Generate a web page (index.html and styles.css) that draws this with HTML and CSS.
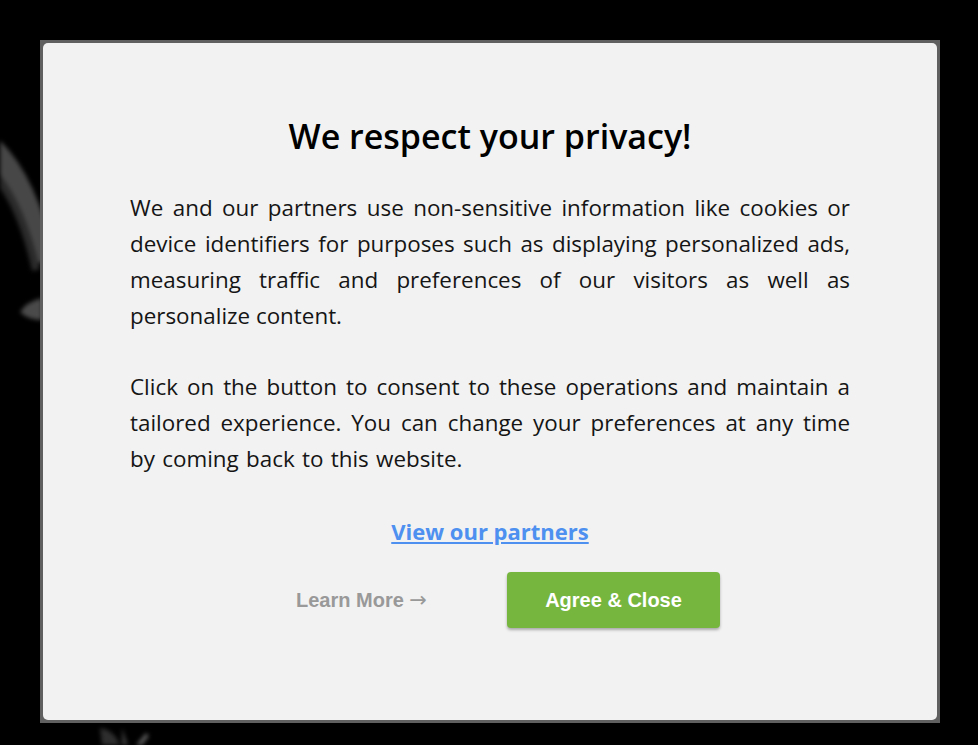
FILE: index.html
```html
<!DOCTYPE html>
<html lang="en">
<head>
    <meta charset="UTF-8">
    <meta name="viewport" content="width=device-width, initial-scale=1.0">
    <title>We respect your privacy</title>
    <link rel="stylesheet" href="styles.css">
</head>
<body>
    <!-- sfondo sfocato dietro al popup -->
    <svg class="backdrop" width="978" height="745" viewBox="0 0 978 745">
        <path d="M-20 138 Q 25 170 44 262" fill="none" stroke="#474747" stroke-width="22"/>
        <path d="M-20 160 Q 18 190 36 270" fill="none" stroke="#2a2a2a" stroke-width="8"/>
        <path d="M20 312 q6 -10 22 -14 l0 22 q-14 0 -22 -8z" fill="#4a4a4a"/>
        <path d="M100 728 q14 2 20 17 l-18 0z" fill="#2e2e2e"/>
        <path d="M122 728 l6 17 l-6 0z" fill="#3a3a3a"/>
        <path d="M136 745 l10 -12 l3 3 l-7 9z" fill="#5a5a5a"/>
    </svg>

    <div class="modal">
        <div class="panel">
            <h1>We respect your privacy!</h1>

            <p class="text">We and our partners use non-sensitive information like cookies or device identifiers for purposes such as displaying personalized ads, measuring traffic and preferences of our visitors as well as personalize content.</p>

            <p class="text consent">Click on the button to consent to these operations and maintain a tailored experience. You can change your preferences at any time by coming back to this website.</p>

            <a class="partners" href="#">View our partners</a>

            <div class="actions">
                <a class="learn" href="#">Learn More <span class="arrow">&rarr;</span></a>
                <button type="button" class="agree">Agree &amp; Close</button>
            </div>
        </div>
    </div>
</body>
</html>
```

FILE: styles.css
```css
/* Popup privacy */
body {
    margin: 0;
    background-color: #000;
    font-family: "Open Sans", "Noto Sans", sans-serif;
    position: relative;
    min-height: 745px;
    overflow: hidden;
}
.backdrop {
    position: absolute;
    left: 0;
    top: 0;
    filter: blur(2px);
}
.modal {
    position: relative;
    width: 894px;
    margin: 40px 0 0 40px;
    padding: 3px;
    background: #606060;
}
.panel {
    background: #f2f2f2;
    border-radius: 5px;
    padding: 73px 87px 92px;
    display: flex;
    flex-direction: column;
    align-items: center;
}
h1 {
    margin: 0;
    font-size: 34px;
    line-height: 40px;
    font-weight: 600;
    color: #000;
}
.text {
    margin: 34px 0 0;
    font-size: 22.4px;
    line-height: 36px;
    color: #151515;
    text-align: justify;
}
.text + .text {
    margin-top: 35px;
}
.consent {
    word-spacing: 1.5px;
}
.partners {
    margin-top: 39px;
    font-size: 22px;
    line-height: 30px;
    font-weight: 700;
    color: #4d90f0;
    text-decoration: underline;
}
.actions {
    margin-top: 26px;
    display: flex;
    align-items: center;
    gap: 74px;
    padding-left: 36px;
}
.learn {
    width: 137px;
    font-family: "Liberation Sans", Arial, sans-serif;
    font-size: 20px;
    font-weight: 700;
    color: #999;
    text-decoration: none;
    white-space: nowrap;
}
.arrow {
    font-family: "DejaVu Sans", sans-serif;
    font-weight: 400;
    font-size: 21px;
}
.agree {
    font-family: "Liberation Sans", Arial, sans-serif;
    font-size: 20px;
    font-weight: 700;
    color: #fff;
    background-color: #76b63f;
    border: none;
    border-radius: 4px;
    width: 213px;
    height: 56px;
    box-shadow: 0 2px 3px rgba(0, 0, 0, 0.3);
    cursor: pointer;
}
```
